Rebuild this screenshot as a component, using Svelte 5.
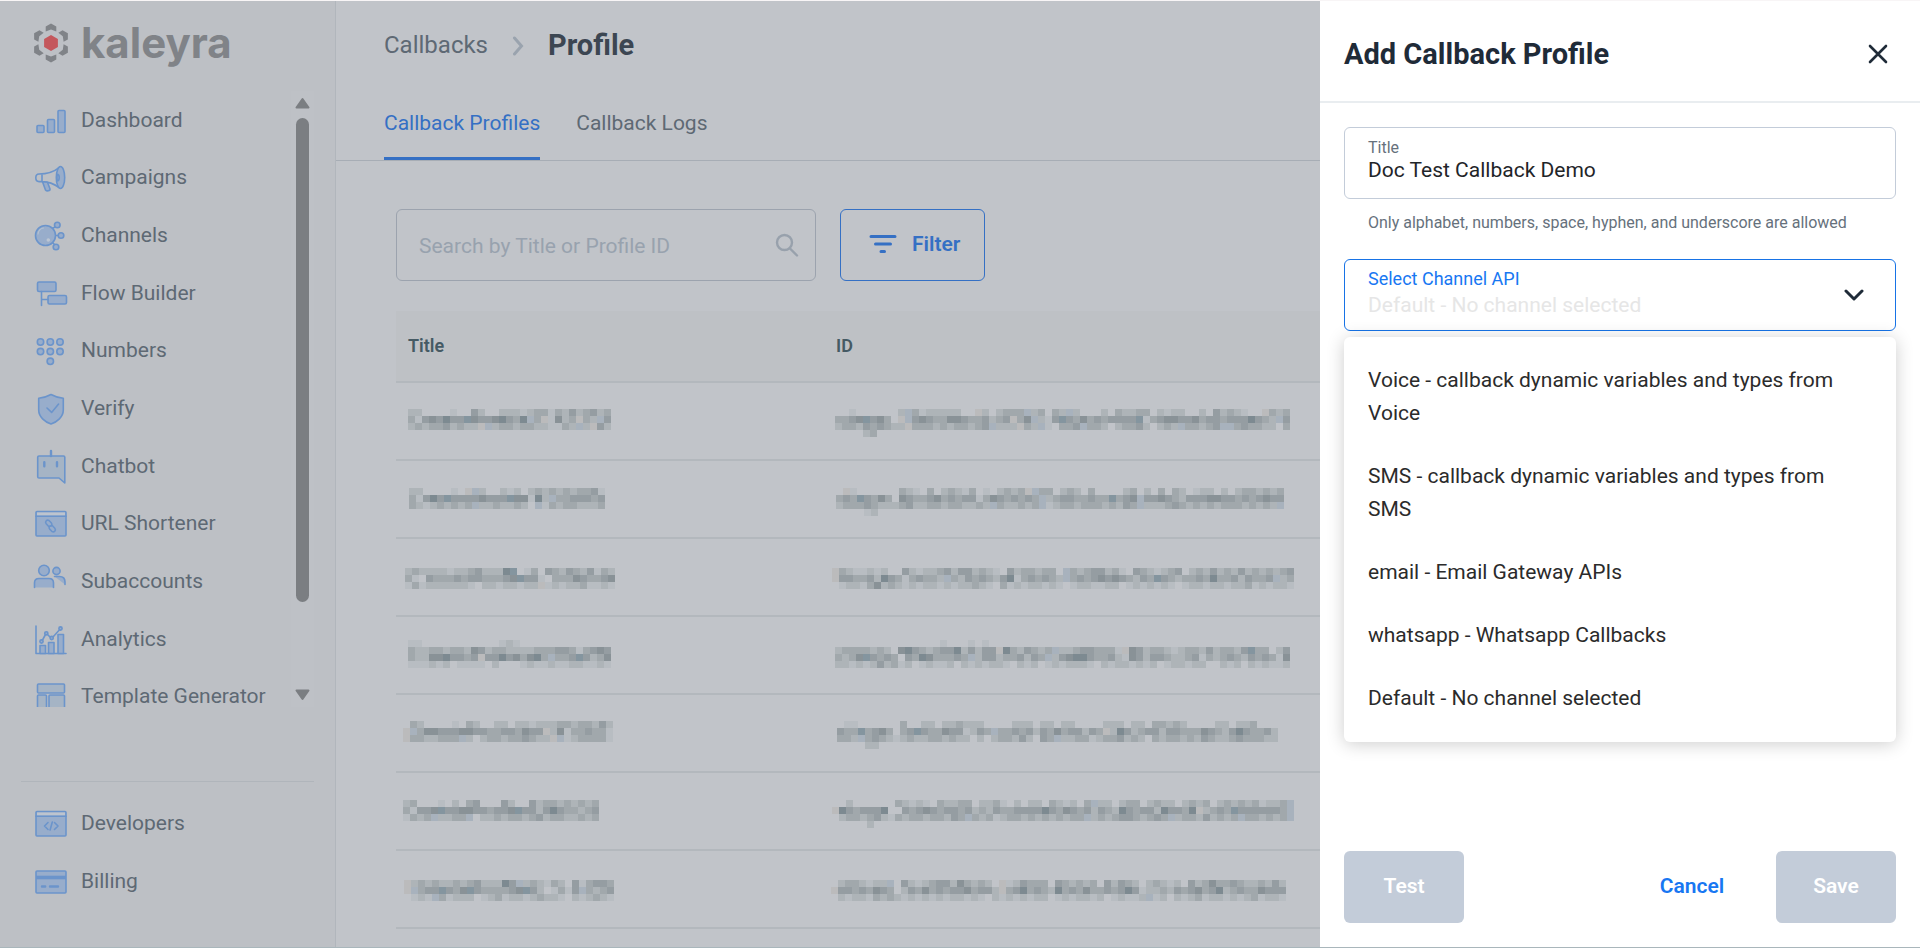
<script>
  const navItems = [
    { label: 'Dashboard', icon: 'bars' },
    { label: 'Campaigns', icon: 'horn' },
    { label: 'Channels', icon: 'channels' },
    { label: 'Flow Builder', icon: 'flow' },
    { label: 'Numbers', icon: 'dots' },
    { label: 'Verify', icon: 'shield' },
    { label: 'Chatbot', icon: 'bot' },
    { label: 'URL Shortener', icon: 'link' },
    { label: 'Subaccounts', icon: 'people' },
    { label: 'Analytics', icon: 'chart' },
    { label: 'Template Generator', icon: 'template' }
  ];
  const footerItems = [
    { label: 'Developers', icon: 'code' },
    { label: 'Billing', icon: 'card' }
  ];
  const channels = [
    'Voice - callback dynamic variables and types from Voice',
    'SMS - callback dynamic variables and types from SMS',
    'email - Email Gateway APIs',
    'whatsapp - Whatsapp Callbacks',
    'Default - No channel selected'
  ];

  // Masked cell contents: each letter is one mosaic tile, a dot is an empty tile.
  const tones = {
    a: '#b8bdc2', b: '#aeb4b8', c: '#a1a8ac', d: '#959da2', e: '#899297',
    f: '#7d8a91', s: '#84959f', u: '#a8b2bd', w: '#bbbbbc'
  };
  const TILE = 7;
  const masked = [
    {
      title: { x: 8, y: 6, cols: 29, lines: ['bb....a..db..bbbabccacbdbcdbc', 'cadedfddseddefdcfucwaebcwcbud', 'bcbccdbcbbwubccbccbbaacbubwdb'] },
      id: { x: 7, y: 6, cols: 65, lines: [
        '..a......bucabbbbb..wb.bcccubc.cbub...b.cbbcc.babb..b.dbcba..wcbc',
        'ccdesdec.wudedcceedccdbcdwceubadsdcecdcddddsacdeeddecddcdddfdcbud',
        'bccbdcdcbbwcccbcbccbcdubbbwcbua.ccduccb.bccdb.bcbuccbcduucdccbb.c',
        '....bc'] }
    },
    {
      title: { x: 9, y: 7, cols: 28, lines: ['bb....a.wub..bab.bcbcbcbccda', 'cadfdsddddedddseeafbuccdddcd', 'cbabcbcbcubbcbbcb.uacbccbbbc'] },
      id: { x: 8, y: 7, cols: 64, lines: [
        '.wa......cba.c.bcbac.a.bcbcwucc.bcb.c....bc.b.c.cb.abb.b.bccbcbc',
        'cdcsdcec.edccdecdcddacedcdcdcubcddccdccscdeuddedcbdddeeddcdcdedd',
        'bcccdcbbbcdbbccbccbbcbucbbcbcuabccbcccbcbdcubbbcdcbcbcbcccbcbcbu',
        '....ab'] }
    },
    {
      title: { x: 5, y: 9, cols: 30, lines: ['bcbbbbabbcdbbbfs.ac.dcbdcbdacb', 'ca.dcccdcddcccdesdda.cccedccdes', 'acabbbbbba.bbabbabbwababbcaaba'] },
      id: { x: 4, y: 9, cols: 66, lines: [
        'wcbaabab..dbabbcdbddbcba.dbccbcc.ucbcddbca.dcbabcd.bcbdbcbdbcbcbcd',
        'wddccdbfdcacdccbucbdcdcbdfacdcdcbucdcdededcbdcsdcbccdcfccdbdccdubc',
        '.abbacebcbababbababbcba.cababbaba.abbaabb.abababa.abbabbabbcababba'] }
    },
    {
      title: { x: 8, y: 3, cols: 29, lines: ['aa...........aba', 'cbbccbccbedbccbbbbcccddcacded', 'cbbeefddcdwddfdecefcuccdsdbcee', 'aaabab.aaaa.b...abaabaabbaaba'] },
      id: { x: 7, y: 3, cols: 65, lines: [
        '...............a...a.a',
        'bccccbcb.efdcbcddfbdbddwfcbdcbcubbcddcccawedbccbabccbdbccbdscc.bdcb',
        'cbcesdcdc.dcfecccdcubddbccdbdcubdeffdccdbaedbddcbbcdacbcdcbdcdcaecb',
        'bbababdbcab.abaab.bababba.bab.ababbba.babbabab.abbabb..bab.babaab'] }
    },
    {
      title: { x: 3, y: 6, cols: 30, lines: ['.cb....a.cb..bb.bbabbbccbccbdbc', 'wuceedddeeddccddceddwbeaccdccad', 'wccbbcccub.bccbccdcbbwuabccccabc'] },
      id: { x: 9, y: 6, cols: 63, lines: [
        '.aa......c..bb.bbcbbb....bbb.bb.bb....bbb.bb.ccbcb....bb.bbc',
        'dccscdec.cdsdcceddabdcuccdcdbdcecddbdcwbfdbcddbddcccedcbdfdccdb',
        'ccbucdcbabcbbccbcbb.b.bccbdb.dcubbccabccdbcb.cbccbcbdcbbcdcccbb',
        '....bb'] }
    },
    {
      title: { x: 3, y: 7, cols: 28, lines: ['bc...a.b.cd...db..dbccbcbcbc', 'caddesddeeddcddesddbdfdccbcd', 'acbcubbccu.bbcbccbcdbccbbcbc'] },
      id: { x: 4, y: 7, cols: 66, lines: [
        '..b......cbaba.cbbcc.bbca.b.bb.cbab.cubb.bcc.bcbb.bcbc.bcbcbcabbcu',
        'wfdcdddf..dcdedcddcdbcbdccddddfdcedcdbdcbfdcddbfddcfwbcdcsddddddcu',
        '.bccbcdbacbccbccbdcucbcabccbcbcbcbccubcbcddcbcdcubccbdbcbcuccbcbcu',
        '.....b'] }
    },
    {
      title: { x: 4, y: 9, cols: 30, lines: ['wbcbcbbcbcdbbbfdubcbacb.dacddcb', 'wucddsdcesdccccdesdb.acaducbcdd', '.abaucabbb.abcabbabcbba.babcbab'] },
      id: { x: 3, y: 9, cols: 65, lines: [
        '.bccbabbu.dbabcddbecbcb.wabdccc.dcbcbc.dbdcb.bcbab.dbceccdcbbcbdbe',
        'wddcdcedc.bdcecdcddecddbwcdfcdcbfcdceccdcdfdabbcbdcdecdfbcdccedddc',
        '.babbacbcbababababbaba.babababb.ababbab.abaabuab.babcabbababcabbab'] }
    }
  ];

  const tilesOf = (m) =>
    m.lines.flatMap((line, r) =>
      [...line].slice(0, m.cols).flatMap((ch, c) =>
        tones[ch] ? [{ x: m.x + c * TILE, y: m.y + r * TILE, fill: tones[ch] }] : []
      )
    );

  let title = $state('Doc Test Callback Demo');
  let search = $state('');
  let channel = $state(channels[4]);
</script>

{#snippet icon(name)}
  <svg class="nav-icon" viewBox="0 0 36 36" width="36" height="36" aria-hidden="true">
    {#if name === 'bars'}
      <rect x="4" y="23.5" width="7" height="7" rx="1" />
      <rect x="14.5" y="17.5" width="7" height="13" rx="1" />
      <rect x="25" y="8.5" width="7" height="22" rx="1" />
    {:else if name === 'horn'}
      <path class="line" d="M26.500 8.300C20 13.500 13 15 6 15C3.800 15 2.800 16.600 2.800 18.800S3.800 22.600 6 22.600H9C15 22.600 20 24 26.500 28.800M9 15V22.600" />
      <path d="M9.500 22.800L12.500 31C13.800 32.500 17.300 32 17 30L14.500 23.200Z" />
      <ellipse cx="27.500" cy="18.500" rx="4.200" ry="11" />
      <path d="M24 15.200C27 15.200 27 22 24 22Z" />
    {:else if name === 'channels'}
      <path class="line" d="M19.500 11.200 22.300 10M22.500 18.500H25M19.500 25.500l2.200 2.200" />
      <circle cx="12.500" cy="18.500" r="10" />
      <circle cx="24.300" cy="8" r="2.800" />
      <circle cx="28" cy="18.500" r="2.800" />
      <circle cx="23" cy="30" r="2.800" />
      <circle class="shine" cx="15.300" cy="23" r="1.800" />
      <path class="glint" d="M5 17c.5-3.500 2.500-5.500 5.500-6" />
    {:else if name === 'flow'}
      <rect x="4.500" y="7" width="18.500" height="9.500" rx="1.500" />
      <rect x="15" y="20.500" width="18.500" height="8.500" rx="1.500" />
      <path class="line" d="M8.500 16.500v14M8.500 24.500H15" />
    {:else if name === 'dots'}
      {#each [[7.5, 10], [17.3, 10], [27, 10], [7.5, 19.6], [17.3, 19.6], [27, 19.6], [17.3, 29.3]] as [cx, cy]}
        <circle {cx} {cy} r="3.200" />
      {/each}
    {:else if name === 'shield'}
      <path d="M18 4.500c3.500 2 8 3.200 12.300 3.700V20c0 7-6.300 12-12.300 14C12 32 5.700 27 5.700 20V8.200C10 7.700 14.500 6.500 18 4.500z" />
      <path class="line" d="m14 18 4.600 4.400 7-8.400" />
    {:else if name === 'bot'}
      <path class="soft" d="M6 8h24.500q1.300 0 1.300 1.300V35L26 30H6q-1.300 0-1.300-1.300V9.300Q4.700 8 6 8z" />
      <path class="line bold" d="M18 3v5M11.300 14.300v4M24 14.300v4" />
    {:else if name === 'link'}
      <rect x="3" y="6.500" width="30" height="24.500" rx="1" />
      <path class="pale" d="M4 7.500h28v3H4z" />
      <path class="line" d="M3 11.300h30" />
      <path class="line" d="M15.500 21.300 13.200 18.800C11.500 16.500 14 14 16.200 15.700L18.200 17.800C19.300 19 19 20.300 18 21.200M19.500 20.700 21.800 23.200C23.500 25.500 21 28 18.800 26.300L16.800 24.200C15.700 23 16 21.700 17 20.800" />
    {:else if name === 'people'}
      <circle cx="11" cy="7.500" r="5.300" />
      <circle cx="23.500" cy="8" r="3.600" />
      <path d="M1.500 24.500V20q0-4.500 4.500-4.500h10q4.500 0 4.500 4.500v4.500" />
      <path d="M21.500 13.500h5q5.500 0 5.500 5.500v2.500" />
    {:else if name === 'chart'}
      <path class="line" d="M3 5v27.500h30M9.500 19l3-5.500M14.500 13.500l3 3M20 16l6.500-7.200" />
      <rect x="7" y="24.500" width="5.500" height="8" />
      <rect x="15.500" y="21.500" width="5.500" height="11" />
      <rect x="25" y="13.500" width="5.500" height="19" />
      <circle cx="8.500" cy="20.500" r="1.600" />
      <circle cx="13.300" cy="12.300" r="1.600" />
      <circle cx="18.700" cy="17" r="1.600" />
      <circle cx="27.500" cy="7.500" r="1.600" />
    {:else if name === 'template'}
      <rect class="soft" x="4.500" y="6" width="27" height="9" rx="1" />
      <rect class="soft" x="4.500" y="17" width="9" height="17" rx="1" />
      <rect class="soft" x="16" y="17" width="15.500" height="17" rx="1" />
    {:else if name === 'code'}
      <rect x="3" y="6.500" width="30" height="24.500" rx="1" />
      <path class="pale" d="M4 7.500h28v3H4z" />
      <path class="line" d="M3 11.300h30M15 17.500l-3.500 3.500 3.500 3.500M21.500 17.500 25 21l-3.500 3.500M19.300 17l-2.200 8" />
    {:else if name === 'card'}
      <rect x="3" y="8" width="30" height="22" rx="1" />
      <path class="line stripe" d="M3 14.500h30" />
      <path class="line bold" d="M9 23.500h3.200M17 23.500h8" />
    {/if}
  </svg>
{/snippet}

{#snippet mosaic(m)}
  <svg class="mosaic" width="476" height="38" aria-hidden="true" shape-rendering="crispEdges">
    {#each tilesOf(m) as t}
      <rect x={t.x} y={t.y} width={TILE} height={TILE} fill={t.fill} />
    {/each}
  </svg>
{/snippet}

<div class="app">
  <aside class="sidebar">
    <div class="logo">
      <svg viewBox="0 0 36 42" width="36" height="42" aria-hidden="true">
        {#each [0, 60, 120, 180, 240, 300] as angle}
          <path fill="#808388" transform="rotate({angle} 18 21)" d="M18 1.500 23.300 4.600V9.500L18 7.400 12.700 9.500V4.600z" />
        {/each}
        <path fill="#c4575c" d="M18 13 24.900 17v8L18 29l-6.900-4v-8z" />
      </svg>
      <span>kaleyra</span>
    </div>
    <nav class="scroller" aria-label="Main">
      <ul class="nav-list">
        {#each navItems as item}
          <li><a href="#{item.icon}">{@render icon(item.icon)}{item.label}</a></li>
        {/each}
      </ul>
      <div class="scrollbar" aria-hidden="true">
        <svg viewBox="0 0 15 12" width="15" height="12"><path d="M7.500 2 13.500 10.500H1.500z" /></svg>
        <div class="thumb"></div>
        <svg viewBox="0 0 15 12" width="15" height="12"><path d="M7.500 10 13.500 1.500H1.500z" /></svg>
      </div>
    </nav>
    <ul class="nav-footer">
      {#each footerItems as item}
        <li><a href="#{item.icon}">{@render icon(item.icon)}{item.label}</a></li>
      {/each}
    </ul>
  </aside>

  <main class="main">
    <div class="breadcrumb">
      <a href="#callbacks">Callbacks</a>
      <svg viewBox="0 0 12 20" width="12" height="20" aria-hidden="true"><path d="M2.500 2 9.500 10 2.500 18" /></svg>
      <h1>Profile</h1>
    </div>
    <div class="tabs" role="tablist">
      <button class="tab active" role="tab" aria-selected="true">Callback Profiles</button>
      <button class="tab" role="tab" aria-selected="false">Callback Logs</button>
    </div>
    <div class="content">
      <div class="toolbar">
        <div class="search">
          <input type="search" aria-label="Search by Title or Profile ID" placeholder="Search by Title or Profile ID" bind:value={search} />
          <svg viewBox="0 0 24 24" width="24" height="24" aria-hidden="true"><circle cx="9.500" cy="9.500" r="7.500" /><path d="m15 15.500 7 7" /></svg>
        </div>
        <button class="filter">
          <svg viewBox="0 0 28 20" width="28" height="20" aria-hidden="true"><path d="M2 2.500h24M6.500 10h15M12 17.500h3.500" /></svg>
          Filter
        </button>
      </div>
      <table>
        <thead>
          <tr><th class="col-title">Title</th><th>ID</th></tr>
        </thead>
        <tbody>
          {#each masked as row}
            <tr>
              <td>{@render mosaic(row.title)}</td>
              <td>{@render mosaic(row.id)}</td>
            </tr>
          {/each}
        </tbody>
      </table>
    </div>
  </main>

  <section class="drawer" aria-labelledby="drawer-title">
    <header>
      <h2 id="drawer-title">Add Callback Profile</h2>
      <button class="close" aria-label="Close">
        <svg viewBox="0 0 20 20" width="20" height="20" aria-hidden="true"><path d="m2 2 16 16M18 2 2 18" /></svg>
      </button>
    </header>
    <div class="form">
      <div class="field">
        <label for="title">Title</label>
        <input id="title" type="text" bind:value={title} />
      </div>
      <p class="hint">Only alphabet, numbers, space, hyphen, and underscore are allowed</p>
      <div class="field select">
        <label for="channel">Select Channel API</label>
        <select id="channel" bind:value={channel}>
          {#each channels as c}<option value={c}>{c}</option>{/each}
        </select>
        <svg class="chevron" viewBox="0 0 20 14" width="20" height="14" aria-hidden="true"><path d="m2 3 8 8 8-8" /></svg>
        <ul class="menu">
          {#each channels as c}
            <li><button onclick={() => (channel = c)}>{c}</button></li>
          {/each}
        </ul>
      </div>
    </div>
    <footer>
      <button class="solid" disabled>Test</button>
      <div class="actions">
        <button class="plain">Cancel</button>
        <button class="solid" disabled>Save</button>
      </div>
    </footer>
  </section>
</div>

<style>
  :global(body) {
    margin: 0;
    background: #c1c4c9;
  }
  .app, .app * {
    box-sizing: border-box;
  }
  .app {
    display: grid;
    grid-template-columns: 336px minmax(0, 1fr) 600px;
    min-height: 100vh;
    border-top: 1px solid #f8f5f6;
    border-bottom: 1px solid #a9b6bb;
    font-family: Roboto, "Liberation Sans", sans-serif;
    font-size: 21px;
    color: #5e6974;
  }
  button, input, select {
    font: inherit;
    color: inherit;
    background: none;
    border: 0;
    padding: 0;
    margin: 0;
    outline: 0;
  }
  a {
    color: inherit;
    text-decoration: none;
  }
  ul {
    list-style: none;
    margin: 0;
    padding: 0;
  }
  h1, h2, p {
    margin: 0;
  }

  .sidebar {
    background: #bdc0c5;
    border-right: 1px solid #b1b6bc;
    padding: 0 21px 0 21px;
  }
  .logo {
    display: flex;
    align-items: center;
    gap: 12px;
    height: 90px;
    padding: 0 0 6px 12px;
    font: 700 42px/48px Inter, "Liberation Sans", sans-serif;
    color: #808388;
  }
  .scroller {
    display: flex;
    justify-content: space-between;
    height: 616px;
    overflow: hidden;
  }
  .nav-list {
    display: grid;
    grid-template-rows: repeat(11, 1fr);
    height: 634px;
    flex: 1;
  }
  .nav-list a, .nav-footer a {
    display: flex;
    align-items: center;
    gap: 12px;
    height: 100%;
    padding-left: 12px;
    white-space: nowrap;
  }
  .nav-icon {
    flex: none;
  }
  .nav-icon :is(rect, circle, ellipse, path) {
    fill: #98adcb;
    stroke: #6b94cb;
    stroke-width: 1.6;
    stroke-linejoin: round;
    stroke-linecap: round;
  }
  .nav-icon .soft {
    fill: #a5b4c5;
  }
  .nav-icon .line {
    fill: none;
  }
  .nav-icon .bold {
    stroke-width: 2.4;
  }
  .nav-icon .stripe {
    stroke-width: 3.6;
    stroke-linecap: butt;
  }
  .nav-icon .pale {
    fill: #bdc4ce;
    stroke: none;
  }
  .nav-icon .shine {
    fill: #bcc6d3;
    stroke: none;
  }
  .nav-icon .glint {
    fill: none;
    stroke: #b3c0d1;
    stroke-width: 1.2;
  }
  .scrollbar {
    display: flex;
    flex-direction: column;
    align-items: center;
    width: 23px;
    padding: 6px 0;
    background: #bec1c6;
  }
  .scrollbar path {
    fill: #7b7e82;
    stroke: #7b7e82;
    stroke-width: 2;
    stroke-linejoin: round;
  }
  .thumb {
    width: 13px;
    height: 484px;
    margin: 9px 0 auto;
    border-radius: 7px;
    background: #7b7e82;
  }
  .nav-footer {
    margin-top: 74px;
    padding-top: 12px;
    border-top: 1px solid #b0b5bb;
  }
  .nav-footer li {
    height: 58px;
  }

  .main {
    background: #c1c4c9;
    overflow: hidden;
  }
  .breadcrumb {
    display: flex;
    align-items: center;
    height: 62px;
    padding: 26px 48px 0;
    font-size: 24px;
  }
  .breadcrumb svg {
    margin: 2px 24px 0;
    fill: none;
    stroke: #9aa3ae;
    stroke-width: 3;
    stroke-linecap: round;
  }
  h1 {
    font-size: 29px;
    font-weight: 700;
    line-height: 36px;
    color: #3c4652;
  }
  .tabs {
    display: flex;
    gap: 36px;
    margin-top: 42px;
    padding: 0 48px;
    border-bottom: 1px solid #a7adb5;
  }
  .tab {
    padding-bottom: 16px;
    line-height: 36px;
    border-bottom: 3px solid transparent;
  }
  .tab.active {
    color: #3570c4;
    border-color: #3570c4;
  }
  .content {
    padding: 48px 0 0 60px;
  }
  .toolbar {
    display: flex;
    gap: 24px;
    margin-bottom: 30px;
  }
  .search, .filter {
    display: flex;
    align-items: center;
    height: 72px;
    border: 1px solid #9ca3ae;
    border-radius: 6px;
  }
  .search {
    width: 420px;
    padding: 0 16px 0 22px;
  }
  .search input {
    flex: 1;
    min-width: 0;
    padding-top: 2px;
    appearance: none;
  }
  .search input::placeholder {
    color: #98a2ae;
    opacity: 1;
  }
  .search svg {
    fill: none;
    stroke: #98a1ac;
    stroke-width: 2.4;
    stroke-linecap: round;
  }
  .filter {
    gap: 15px;
    padding: 0 24px 2px 28px;
    font-weight: 600;
    color: #3570c4;
    border-color: #3570c4;
  }
  .filter svg {
    fill: none;
    stroke: #3570c4;
    stroke-width: 3;
    stroke-linecap: round;
  }
  table {
    width: 100%;
    table-layout: fixed;
    border-spacing: 0;
  }
  th {
    height: 72px;
    padding: 0 12px 2px;
    text-align: left;
    font-size: 18px;
    font-weight: 600;
    color: #455a64;
    background: #bec1c5;
    border-bottom: 2px solid #b3b8bd;
  }
  .col-title {
    width: 428px;
  }
  td {
    height: 78px;
    padding: 20px 4px 0;
    vertical-align: top;
    border-bottom: 2px solid #b3b8bd;
  }
  .mosaic {
    display: block;
  }

  .drawer {
    display: flex;
    flex-direction: column;
    background: #fff;
  }
  .drawer header {
    display: flex;
    align-items: center;
    justify-content: space-between;
    height: 102px;
    padding: 6px 24px 0;
    border-bottom: 2px solid #e9edf0;
  }
  h2 {
    font-size: 29px;
    font-weight: 700;
    line-height: 36px;
    color: #1f2b38;
  }
  .close {
    display: grid;
    place-items: center;
    width: 36px;
    height: 36px;
  }
  .close svg, .chevron {
    fill: none;
    stroke: #1f2b38;
    stroke-width: 2.6;
    stroke-linecap: round;
    stroke-linejoin: round;
  }
  .form {
    flex: 1;
    padding: 24px 24px 0;
  }
  .field {
    height: 72px;
    padding: 10px 23px 0;
    border: 1px solid #c3ccd9;
    border-radius: 6px;
  }
  .field label {
    display: block;
    font-size: 16px;
    line-height: 20px;
    color: #66717c;
  }
  .field input, .field select {
    display: block;
    width: 100%;
    height: 24px;
    color: #1f2529;
  }
  .hint {
    margin: 12px 24px 24px;
    font-size: 16px;
    line-height: 24px;
    color: #66717c;
  }
  .field.select {
    position: relative;
    padding-top: 9px;
    border-color: #1773e6;
  }
  .field.select label {
    font-size: 18px;
    color: #1877f2;
  }
  .field select {
    appearance: none;
    height: 32px;
    color: #e6e6e6;
  }
  .field select option {
    color: #2b2b2b;
  }
  .chevron {
    position: absolute;
    right: 31px;
    top: 28px;
    stroke-width: 3;
    pointer-events: none;
  }
  .menu {
    position: absolute;
    top: calc(100% + 7px);
    left: -1px;
    right: -1px;
    padding: 12px 0;
    background: #fff;
    border-radius: 6px;
    box-shadow: 0 2px 18px rgba(0, 0, 0, 0.2);
  }
  .menu button {
    display: block;
    width: 100%;
    padding: 15px 48px 15px 24px;
    text-align: left;
    line-height: 33px;
    color: #2b2b2b;
  }
  .drawer footer {
    display: flex;
    justify-content: space-between;
    padding: 24px;
  }
  .actions {
    display: flex;
    gap: 24px;
  }
  .solid, .plain {
    width: 120px;
    height: 72px;
    padding-bottom: 2px;
    border-radius: 6px;
    font-weight: 600;
  }
  .solid {
    color: #fff;
    background: #c3ccd9;
  }
  .plain {
    color: #1877f2;
  }
</style>
